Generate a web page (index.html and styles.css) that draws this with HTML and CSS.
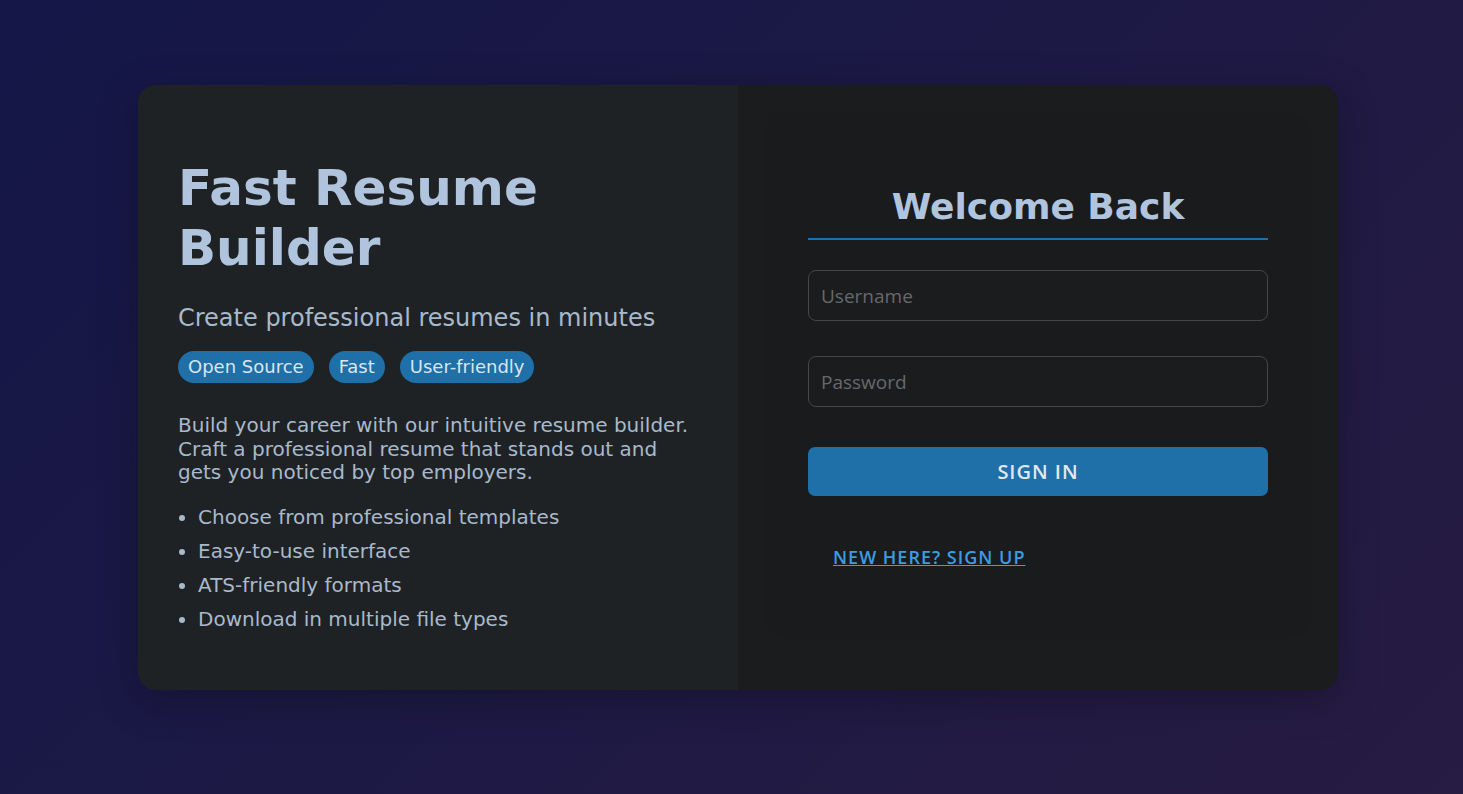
FILE: index.html
```html
<!DOCTYPE html>
<html lang="en">
<head>
<meta charset="utf-8">
<title>Fast Resume Builder - Sign In</title>
<link rel="stylesheet" href="styles.css">
</head>
<body>
<main class="page">
  <section class="card">
    <div class="intro">
      <h1 class="intro-title">Fast Resume Builder</h1>
      <p class="intro-sub">Create professional resumes in minutes</p>
      <div class="tags">
        <span class="tag">Open Source</span>
        <span class="tag">Fast</span>
        <span class="tag">User-friendly</span>
      </div>
      <p class="intro-text">Build your career with our intuitive resume builder. Craft a professional resume that stands out and gets you noticed by top employers.</p>
      <ul class="features">
        <li>Choose from professional templates</li>
        <li>Easy-to-use interface</li>
        <li>ATS-friendly formats</li>
        <li>Download in multiple file types</li>
      </ul>
    </div>
    <div class="auth">
      <form class="auth-box">
        <h2 class="auth-title">Welcome Back</h2>
        <input class="field" type="text" placeholder="Username">
        <input class="field" type="password" placeholder="Password">
        <button class="submit" type="button">SIGN IN</button>
        <a class="switch" href="#">NEW HERE? SIGN UP</a>
      </form>
    </div>
  </section>
</main>
</body>
</html>
```

FILE: styles.css
```css
* { box-sizing: border-box; }

html, body {
  margin: 0;
  height: 100%;
}

body {
  font-family: "DejaVu Sans", sans-serif;
  background: linear-gradient(135deg, #141747 0%, #1d1945 50%, #271c42 100%);
  color: #b0c4de;
}

.page {
  min-height: 100%;
  display: flex;
  align-items: center;
  justify-content: center;
  padding: 0 0 19px 13px;
}

.card {
  width: 1200px;
  height: 605px;
  display: flex;
  border-radius: 18px;
  overflow: hidden;
  box-shadow: 0 10px 40px rgba(0, 0, 0, 0.25);
}

.intro {
  flex: 1;
  background: #1f2224;
  padding: 73px 40px 40px;
  display: flex;
  flex-direction: column;
}

.intro-title {
  margin: 0 0 25px;
  font-size: 50px;
  line-height: 60px;
  font-weight: 700;
  color: #b0c4de;
}

.intro-sub {
  margin: 0 0 18px;
  font-size: 24px;
  line-height: 30px;
  color: #a9b9cc;
}

.tags {
  display: flex;
  gap: 15px;
  margin-bottom: 31px;
}

.tag {
  background: #1f6fa8;
  color: #dbe5ee;
  font-size: 18px;
  line-height: 22px;
  padding: 5px 10px;
  border-radius: 16px;
}

.intro-text {
  margin: 0 0 20px;
  font-size: 20px;
  line-height: 23.5px;
  color: #a9b9cc;
}

.features {
  margin: 0;
  padding: 0 0 0 20px;
  font-size: 20px;
  line-height: 24px;
  color: #a9b9cc;
}

.features li {
  margin-bottom: 10px;
}

.features li:last-child { margin-bottom: 0; }

.auth {
  flex: 1;
  background: #1b1c1e;
  padding: 40px;
}

.auth-box {
  height: 500px;
  background: #1a1b1d;
  box-shadow: 0 0 16px rgba(0, 0, 0, 0.08);
  padding: 61px 30px 30px;
  display: flex;
  flex-direction: column;
}

.auth-title {
  margin: 0 0 30px;
  padding-bottom: 10px;
  border-bottom: 2px solid #1f6fa8;
  text-align: center;
  font-size: 36px;
  line-height: 42px;
  font-weight: 700;
  color: #b0c4de;
}

.field {
  height: 51px;
  margin-bottom: 35px;
  background: #1a1c1e;
  border: 1px solid #444649;
  border-radius: 8px;
  padding: 0 12px;
  font-family: "Open Sans", sans-serif;
  font-size: 19px;
  color: #c0c8d0;
  outline: none;
}

.field::placeholder { color: #66696c; }

.submit {
  margin-top: 5px;
  height: 49px;
  border: none;
  border-radius: 7px;
  background: #1f6fa8;
  color: #e2e8ee;
  font-family: "Open Sans", sans-serif;
  font-weight: 600;
  font-size: 20px;
  letter-spacing: 1px;
}

.switch {
  align-self: flex-start;
  margin: 49px 0 0 25px;
  font-family: "Open Sans", sans-serif;
  font-weight: 600;
  font-size: 18px;
  letter-spacing: 1px;
  color: #3b9de0;
  text-decoration: underline;
}
```
